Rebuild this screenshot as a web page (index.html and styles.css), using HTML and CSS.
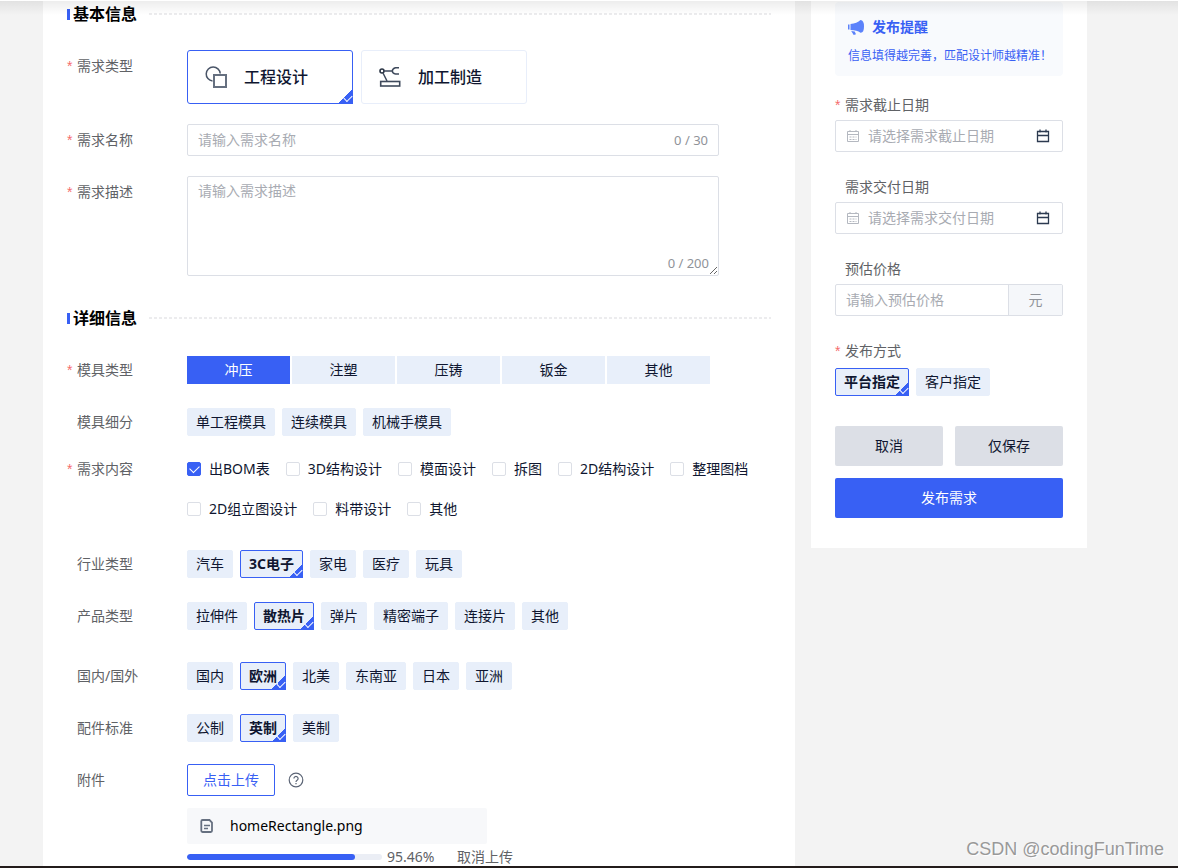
FILE: index.html
```html
<!DOCTYPE html>
<html lang="zh-CN">

<head>
    <meta charset="UTF-8">
    <meta name="viewport" content="width=device-width, initial-scale=1.0">
    <title>发布需求</title>
    <link rel="stylesheet" href="styles.css">
</head>

<body>
    <div class="app">
        <form class="page">
            <main class="panel main-panel">
                <h2 class="section-title">基本信息</h2>

                <div class="row">
                    <span class="label required">需求类型</span>
                    <div class="types">
                        <label class="type pick">
                            <input type="radio" name="demandType" checked>
                            <span class="type-body">
                                <svg class="type-icon" viewBox="0 0 24 24" fill="none" stroke="#4a5568">
                                    <path d="M8.5 16A7 7 0 1 1 16.2 8.5" stroke-width="1.5" />
                                    <rect x="10" y="10" width="12" height="12" stroke="#667080" stroke-width="2" />
                                </svg>
                                工程设计
                            </span>
                        </label>
                        <label class="type pick">
                            <input type="radio" name="demandType">
                            <span class="type-body">
                                <svg class="type-icon" viewBox="0 0 24 24" fill="none" stroke="#3f4a5c">
                                    <circle cx="4" cy="6" r="2" stroke="#2a3444" stroke-width="1.6" />
                                    <path d="M6 6h8M21 2.7h-3.500Q14.500 3.500 14.300 6q.2 2.500 3.200 3H21M5 8l4 8" stroke-width="1.5" />
                                    <rect x="2.700" y="16.500" width="19" height="4.500" stroke-width="1.6" />
                                </svg>
                                加工制造
                            </span>
                        </label>
                    </div>
                </div>

                <div class="row">
                    <label class="label required" for="name">需求名称</label>
                    <div class="field wide">
                        <input type="text" id="name" maxlength="30" placeholder="请输入需求名称">
                        <span class="count">0 / 30</span>
                    </div>
                </div>

                <div class="row">
                    <label class="label required" for="desc">需求描述</label>
                    <div class="area wide">
                        <textarea id="desc" maxlength="200" placeholder="请输入需求描述"></textarea>
                        <span class="area-count">0 / 200</span>
                    </div>
                </div>

                <h2 class="section-title detail-title">详细信息</h2>

                <div class="row">
                    <span class="label required">模具类型</span>
                    <div class="segments">
                        <label class="segment pick"><input type="radio" name="mold" checked><span>冲压</span></label>
                        <label class="segment pick"><input type="radio" name="mold"><span>注塑</span></label>
                        <label class="segment pick"><input type="radio" name="mold"><span>压铸</span></label>
                        <label class="segment pick"><input type="radio" name="mold"><span>钣金</span></label>
                        <label class="segment pick"><input type="radio" name="mold"><span>其他</span></label>
                    </div>
                </div>

                <div class="row before-checks">
                    <span class="label">模具细分</span>
                    <div class="chips">
                        <label class="chip pick"><input type="radio" name="moldSub"><span>单工程模具</span></label>
                        <label class="chip pick"><input type="radio" name="moldSub"><span>连续模具</span></label>
                        <label class="chip pick"><input type="radio" name="moldSub"><span>机械手模具</span></label>
                    </div>
                </div>

                <div class="row check-row">
                    <span class="label required">需求内容</span>
                    <div class="checks">
                        <label class="check"><input type="checkbox" checked>出BOM表</label>
                        <label class="check"><input type="checkbox">3D结构设计</label>
                        <label class="check"><input type="checkbox">模面设计</label>
                        <label class="check"><input type="checkbox">拆图</label>
                        <label class="check"><input type="checkbox">2D结构设计</label>
                        <label class="check"><input type="checkbox">整理图档</label>
                        <label class="check"><input type="checkbox">2D组立图设计</label>
                        <label class="check"><input type="checkbox">料带设计</label>
                        <label class="check"><input type="checkbox">其他</label>
                    </div>
                </div>

                <div class="row">
                    <span class="label">行业类型</span>
                    <div class="chips">
                        <label class="chip pick"><input type="radio" name="industry"><span>汽车</span></label>
                        <label class="chip pick"><input type="radio" name="industry" checked><span>3C电子</span></label>
                        <label class="chip pick"><input type="radio" name="industry"><span>家电</span></label>
                        <label class="chip pick"><input type="radio" name="industry"><span>医疗</span></label>
                        <label class="chip pick"><input type="radio" name="industry"><span>玩具</span></label>
                    </div>
                </div>

                <div class="row group-end">
                    <span class="label">产品类型</span>
                    <div class="chips">
                        <label class="chip pick"><input type="radio" name="product"><span>拉伸件</span></label>
                        <label class="chip pick"><input type="radio" name="product" checked><span>散热片</span></label>
                        <label class="chip pick"><input type="radio" name="product"><span>弹片</span></label>
                        <label class="chip pick"><input type="radio" name="product"><span>精密端子</span></label>
                        <label class="chip pick"><input type="radio" name="product"><span>连接片</span></label>
                        <label class="chip pick"><input type="radio" name="product"><span>其他</span></label>
                    </div>
                </div>

                <div class="row">
                    <span class="label">国内/国外</span>
                    <div class="chips">
                        <label class="chip pick"><input type="radio" name="region"><span>国内</span></label>
                        <label class="chip pick"><input type="radio" name="region" checked><span>欧洲</span></label>
                        <label class="chip pick"><input type="radio" name="region"><span>北美</span></label>
                        <label class="chip pick"><input type="radio" name="region"><span>东南亚</span></label>
                        <label class="chip pick"><input type="radio" name="region"><span>日本</span></label>
                        <label class="chip pick"><input type="radio" name="region"><span>亚洲</span></label>
                    </div>
                </div>

                <div class="row">
                    <span class="label">配件标准</span>
                    <div class="chips">
                        <label class="chip pick"><input type="radio" name="standard"><span>公制</span></label>
                        <label class="chip pick"><input type="radio" name="standard" checked><span>英制</span></label>
                        <label class="chip pick"><input type="radio" name="standard"><span>美制</span></label>
                    </div>
                </div>

                <div class="row">
                    <span class="label">附件</span>
                    <div class="upload">
                        <div class="upload-bar">
                            <button type="button" class="upload-btn">点击上传</button>
                            <svg class="help" viewBox="0 0 16 16" fill="none" stroke="#5b6475" stroke-width="1.2">
                                <circle cx="8" cy="8" r="6.8" />
                                <path d="M5.9 6.5a2.1 2.1 0 1 1 3.2 1.800C8.300 8.800 8 9.100 8 10M8 11v1.300" />
                            </svg>
                        </div>
                        <div class="file">
                            <svg class="file-icon" viewBox="0 0 14 16" fill="none" stroke="#667080">
                                <path d="M2.500 2h7L12 4.500v8.300a1.200 1.200 0 0 1-1.200 1.200H2.500a1.200 1.200 0 0 1-1.200-1.200V3.200A1.200 1.200 0 0 1 2.500 2z" stroke-width="1.8" />
                                <path d="M4 7.500h6M4 10.500h4" stroke-width="1.4" />
                            </svg>
                            homeRectangle.png
                        </div>
                        <div class="progress-row">
                            <div class="progress">
                                <div class="progress-fill" style="width: 86%"></div>
                            </div>
                            <span class="percent">95.46%</span>
                            <button type="button" class="cancel-upload">取消上传</button>
                        </div>
                    </div>
                </div>
            </main>

            <aside class="panel side-panel">
                <div class="notice">
                    <h3 class="notice-title">
                        <svg class="horn" viewBox="0 0 16 16" fill="#5b82fb">
                            <path d="M0 5.500h1.500v5H0zM2.500 5Q9 4.500 12.500 1Q16 1 16 7.500T12.500 13.700Q9 11 2.500 11zM3.200 12l3.500.5L8 15.300l-2.300.7z" />
                        </svg>
                        发布提醒
                    </h3>
                    <p>信息填得越完善，匹配设计师越精准！</p>
                </div>

                <div class="item">
                    <label class="label required" for="deadline">需求截止日期</label>
                    <div class="field date">
                        <svg class="cal" viewBox="0 0 14 14" fill="none" stroke="#b4b8c0">
                            <path d="M1.500 2.500h11v10h-11zM1.500 5.500h11M4 1v2M10 1v2" />
                            <path d="M3.500 8h7M3.500 10.500h7" stroke-dasharray="2 1" />
                        </svg>
                        <input type="text" id="deadline" placeholder="请选择需求截止日期">
                        <svg class="cal" viewBox="0 0 14 14" fill="none" stroke="#2c3a50" stroke-width="1.3">
                            <path d="M1.500 2.500h11v10h-11zM1.500 6.500h11M4 .5v3M10 .5v3" />
                        </svg>
                    </div>
                </div>

                <div class="item">
                    <label class="label" for="delivery">需求交付日期</label>
                    <div class="field date">
                        <svg class="cal" viewBox="0 0 14 14" fill="none" stroke="#b4b8c0">
                            <path d="M1.500 2.500h11v10h-11zM1.500 5.500h11M4 1v2M10 1v2" />
                            <path d="M3.500 8h7M3.500 10.500h7" stroke-dasharray="2 1" />
                        </svg>
                        <input type="text" id="delivery" placeholder="请选择需求交付日期">
                        <svg class="cal" viewBox="0 0 14 14" fill="none" stroke="#2c3a50" stroke-width="1.3">
                            <path d="M1.500 2.500h11v10h-11zM1.500 6.500h11M4 .5v3M10 .5v3" />
                        </svg>
                    </div>
                </div>

                <div class="item">
                    <label class="label" for="price">预估价格</label>
                    <div class="field price">
                        <input type="text" id="price" placeholder="请输入预估价格">
                        <span class="unit">元</span>
                    </div>
                </div>

                <div class="item">
                    <span class="label required">发布方式</span>
                    <div class="chips">
                        <label class="chip pick"><input type="radio" name="publish" checked><span>平台指定</span></label>
                        <label class="chip pick"><input type="radio" name="publish"><span>客户指定</span></label>
                    </div>
                </div>

                <div class="actions">
                    <button type="button" class="btn">取消</button>
                    <button type="button" class="btn">仅保存</button>
                    <button type="submit" class="btn btn-primary">发布需求</button>
                </div>
            </aside>
        </form>
        <div class="bottom-line"></div>
        <div class="watermark">CSDN @codingFunTime</div>
    </div>
</body>

</html>
```
FILE: styles.css
```css
* {
    box-sizing: border-box;
}

body {
    margin: 0;
    background: #f3f3f3;
    color: #0f1630;
    font-family: "Noto Sans", "Noto Sans CJK SC", sans-serif;
    font-size: 14px;
    line-height: 20px;
}

input,
textarea,
button {
    font: inherit;
    color: inherit;
}

h2,
h3,
p {
    margin: 0;
}

.app {
    position: relative;
    display: flex;
    flex-direction: column;
    height: 100vh;
    overflow: hidden;
    border-top: 1px solid #fff;
}

/* shadow of the fixed header */
.app::before {
    content: "";
    position: absolute;
    top: 0;
    left: 0;
    right: 0;
    height: 14px;
    background: linear-gradient(rgba(0, 0, 0, 0.07), rgba(0, 0, 0, 0));
}

.page {
    display: flex;
    flex: 1;
    align-items: flex-start;
    gap: 16px;
    min-height: 0;
    padding: 0 91px 0 43px;
    overflow: hidden;
}

.panel {
    background: #fff;
    padding: 1px 24px 30px;
}

.main-panel {
    flex: 1;
    min-width: 0;
}

.side-panel {
    width: 276px;
}

.section-title {
    display: flex;
    align-items: center;
    margin-bottom: 24px;
    font-size: 16px;
    line-height: 24px;
    color: #000;
}

.section-title::before {
    content: "";
    width: 3px;
    height: 11px;
    margin-right: 3px;
    background: #3860f4;
}

.section-title::after {
    content: "";
    flex: 1;
    height: 2px;
    margin-left: 12px;
    background: repeating-linear-gradient(90deg, #ececee 0 3px, transparent 3px 5px);
}

.detail-title {
    margin-top: 30px;
}

.row {
    display: flex;
    margin-bottom: 20px;
}

.label {
    color: #606266;
    line-height: 32px;
    padding-left: 10px;
}

.row .label {
    flex: none;
    width: 120px;
}

.required {
    padding-left: 0;
}

.required::before {
    content: "*";
    display: inline-block;
    width: 10px;
    color: #f56c6c;
    font-family: "Liberation Sans", sans-serif;
}

/* the native radio lies invisibly over its label */
.pick {
    position: relative;
    cursor: pointer;
}

.pick input {
    position: absolute;
    inset: 0;
    width: 100%;
    height: 100%;
    margin: 0;
    opacity: 0;
    cursor: pointer;
}

.types {
    display: flex;
    gap: 8px;
}

.type-body {
    display: flex;
    align-items: center;
    gap: 16px;
    width: 166px;
    height: 54px;
    padding: 0 16px;
    border: 1px solid #e8eefa;
    border-radius: 3px;
    font-size: 16px;
    font-weight: 500;
}

.type input:checked + span {
    border-color: #3860f4;
}

.type-icon {
    width: 24px;
    height: 24px;
}

.type input:checked + span::before,
.chip input:checked + span::before {
    content: "";
    position: absolute;
    right: 0;
    bottom: 0;
    width: 15px;
    height: 15px;
    background: linear-gradient(135deg, transparent 50%, #3860f4 50%);
}

.type input:checked + span::after,
.chip input:checked + span::after {
    content: "";
    position: absolute;
    right: 1px;
    bottom: 4px;
    width: 7px;
    height: 4px;
    border-left: 1px solid #fff;
    border-bottom: 1px solid #fff;
    transform: rotate(-45deg);
}

.wide {
    flex: 1;
    margin-right: 52px;
}

.field {
    display: flex;
    align-items: center;
    height: 32px;
    border: 1px solid #dcdfe6;
    border-radius: 2px;
    padding: 0 10px;
    background: #fff;
}

.field input {
    flex: 1;
    min-width: 0;
    padding: 0;
    border: none;
    outline: none;
    background: none;
}

::placeholder {
    color: #a8abb2;
    opacity: 1;
}

.count,
.area-count {
    color: #909399;
    font-size: 13px;
}

.area {
    position: relative;
}

.area textarea {
    display: block;
    width: 100%;
    height: 100px;
    padding: 4px 10px;
    border: 1px solid #dcdfe6;
    border-radius: 2px;
    outline: none;
    resize: vertical;
}

.area-count {
    position: absolute;
    right: 10px;
    bottom: 3px;
}

.segments {
    display: flex;
    gap: 2px;
    padding: 2px 0;
}

.segment span {
    display: block;
    width: 103px;
    line-height: 28px;
    text-align: center;
    background: #e8effa;
}

.segment input:checked + span {
    background: #3860f4;
    color: #fff;
}

.chips {
    display: flex;
    flex-wrap: wrap;
    gap: 7px;
    padding: 2px 0;
}

.chip span {
    display: block;
    padding: 0 8px;
    border: 1px solid #e8effa;
    border-radius: 2px;
    line-height: 26px;
    background: #e8effa;
}

.chip input:checked + span {
    border-color: #3860f4;
    font-weight: bold;
}

.before-checks {
    margin-bottom: 11px;
}

.check-row {
    margin-bottom: 19px;
}

.check-row .label {
    line-height: 40px;
}

.checks {
    display: flex;
    flex-wrap: wrap;
    column-gap: 16px;
}

.check {
    display: flex;
    align-items: center;
    gap: 8px;
    height: 40px;
}

.check input {
    appearance: none;
    display: grid;
    place-items: center;
    width: 14px;
    height: 14px;
    margin: 0;
    border: 1px solid #dcdfe6;
    border-radius: 2px;
    background: #fff;
}

.check input:checked {
    border-color: #3860f4;
    background: #3860f4;
}

.check input:checked::before {
    content: "";
    width: 8px;
    height: 5px;
    margin-bottom: 3px;
    border-left: 1px solid #fff;
    border-bottom: 1px solid #fff;
    transform: rotate(-45deg);
}

.group-end {
    margin-bottom: 28px;
}

.upload-bar {
    display: flex;
    align-items: center;
    gap: 13px;
}

.upload-btn {
    width: 88px;
    height: 32px;
    padding: 0;
    border: 1px solid #3860f4;
    border-radius: 2px;
    background: #fff;
    color: #3860f4;
}

.help {
    width: 16px;
    height: 16px;
}

.file {
    display: flex;
    align-items: center;
    gap: 16px;
    width: 300px;
    height: 36px;
    margin-top: 12px;
    padding: 0 13px;
    border-radius: 2px;
    background: #f7f8fa;
    color: #000;
}

.file-icon {
    width: 14px;
    height: 16px;
}

.progress-row {
    display: flex;
    align-items: center;
    height: 26px;
    color: #606266;
}

.progress {
    width: 195px;
    height: 6px;
    margin-right: 5px;
    border-radius: 3px;
    background: #ebeef5;
    overflow: hidden;
}

.progress-fill {
    height: 100%;
    border-radius: 3px;
    background: #3860f4;
}

.percent {
    width: 70px;
}

.cancel-upload {
    padding: 0;
    border: none;
    background: none;
}

.notice {
    margin-bottom: 14px;
    padding: 15px 13px 10px;
    border-radius: 4px;
    background: #f8fafd;
    color: #3860f4;
}

.notice-title {
    display: flex;
    align-items: center;
    gap: 8px;
    margin-bottom: 9px;
    font-size: 14px;
    line-height: 20px;
}

.notice p {
    font-size: 12px;
    line-height: 20px;
    white-space: nowrap;
}

.horn {
    width: 16px;
    height: 16px;
}

.item {
    margin-bottom: 20px;
}

.item .label {
    display: block;
    line-height: 30px;
}

.date {
    gap: 8px;
    padding-right: 12px;
}

.cal {
    width: 14px;
    height: 14px;
}

.price {
    padding-right: 0;
}

.unit {
    width: 54px;
    border-left: 1px solid #dcdfe6;
    background: #f5f7fa;
    color: #909399;
    line-height: 30px;
    text-align: center;
}

.actions {
    display: grid;
    grid-template-columns: 1fr 1fr;
    gap: 12px;
    padding-top: 8px;
}

.btn {
    height: 40px;
    border: none;
    border-radius: 2px;
    background: #dcdfe6;
}

.btn-primary {
    grid-column: span 2;
    background: #3860f4;
    color: #fff;
}

.bottom-line {
    height: 2px;
    background: #231c1b;
}

.watermark {
    position: absolute;
    right: 14px;
    bottom: 7px;
    color: #999;
    font-family: "Liberation Sans", sans-serif;
    font-size: 18px;
    line-height: 24px;
    text-shadow: 1px 1px 1px #fff;
}
```
